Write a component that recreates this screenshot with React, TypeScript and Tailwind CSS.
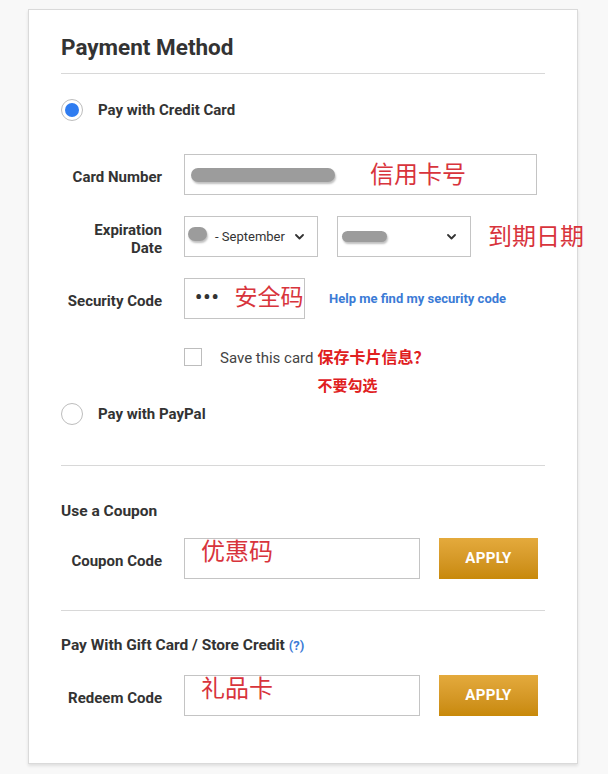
import React from "react";

const Chevron = () => (
  <svg width="9" height="6" viewBox="0 0 9 6" className="shrink-0">
    <polyline points="1,1 4.5,4.5 8,1" fill="none" stroke="#333" strokeWidth="1.8" strokeLinecap="round" strokeLinejoin="round" />
  </svg>
);

const Label = ({ children }: { children: React.ReactNode }) => (
  <div className="w-[101px] shrink-0 text-right text-[15px] leading-[18px] font-bold text-[#333] mr-[22px] mt-[4px] whitespace-nowrap">
    {children}
  </div>
);

const Radio = ({ checked }: { checked?: boolean }) => (
  <div className="w-[22px] h-[22px] rounded-full border border-[#bdbdbd] bg-white flex items-center justify-center shrink-0">
    {checked && <div className="w-[14px] h-[14px] rounded-full bg-[#2f7cf0]" />}
  </div>
);

const Apply = () => (
  <div className="ml-[19px] w-[99px] h-[41px] shrink-0 bg-gradient-to-b from-[#e4aa3c] to-[#c88908] flex items-center justify-center text-white text-[15px] font-bold tracking-[0.3px]">
    APPLY
  </div>
);

export default function App() {
  return (
    <div className="min-h-[774px] bg-[#f8f8f8] pt-[9px] pl-[28px] font-['Roboto','Noto_Sans_CJK_SC',sans-serif]">
      <div className="w-[550px] h-[755px] bg-white border border-[#dadada] shadow-[0_2px_3px_rgba(0,0,0,0.10)] px-[32px]">
        <h2 className="pt-[24px] text-[22.5px] leading-[26px] font-bold text-[#333]">Payment Method</h2>
        <div className="mt-[13px] h-px bg-[#d8d8d8]" />

        <div className="mt-[25px] flex items-center h-[22px]">
          <Radio checked />
          <span className="ml-[15px] text-[15px] font-bold text-[#333]">Pay with Credit Card</span>
        </div>

        <div className="mt-[33px] flex items-center">
          <Label>Card Number</Label>
          <div className="w-[353px] h-[41px] shrink-0 border border-[#c4c4c4] flex items-center pl-[6px]">
            <div className="w-[144px] h-[14px] rounded-full bg-[#9c9c9c] shadow-[1px_2px_2px_rgba(0,0,0,0.25)]" />
            <span className="ml-[35px] text-[24px] text-[#d8343c] whitespace-nowrap">信用卡号</span>
          </div>
        </div>

        <div className="mt-[21px] flex items-center">
          <Label>
            Expiration
            <br />
            Date
          </Label>
          <div className="w-[134px] h-[41px] shrink-0 border border-[#c4c4c4] flex items-center pl-[3px] pr-[13px]">
            <div className="w-[19px] h-[14px] rounded-full bg-[#9c9c9c] shadow-[1px_2px_2px_rgba(0,0,0,0.25)] -mt-[6px]" />
            <span className="ml-[8px] text-[13px] text-[#333] whitespace-nowrap">- September</span>
            <div className="flex-1" />
            <Chevron />
          </div>
          <div className="ml-[19px] w-[134px] h-[41px] shrink-0 border border-[#c4c4c4] flex items-center pl-[4px] pr-[14px]">
            <div className="w-[45px] h-[11px] rounded-full bg-[#9c9c9c] shadow-[1px_2px_2px_rgba(0,0,0,0.25)]" />
            <div className="flex-1" />
            <Chevron />
          </div>
          <span className="ml-[17px] text-[24px] text-[#d8343c] whitespace-nowrap">到期日期</span>
        </div>

        <div className="mt-[21px] flex items-center">
          <Label>Security Code</Label>
          <div className="w-[121px] h-[41px] shrink-0 border border-[#c4c4c4] flex items-center pl-[10px]">
            <span className="text-[20px] font-bold text-[#333] tracking-[1px] -mt-[4px]">•••</span>
            <span className="ml-[15px] text-[23px] text-[#d8343c] whitespace-nowrap">安全码</span>
          </div>
          <span className="ml-[24px] text-[13px] font-bold text-[#3b7bd6] whitespace-nowrap">Help me find my security code</span>
        </div>

        <div className="mt-[29px] flex items-start pl-[123px]">
          <div className="w-[18px] h-[18px] border border-[#bdbdbd] bg-white shrink-0" />
          <span className="ml-[18px] text-[15px] leading-[20px] text-[#444] whitespace-nowrap">Save this card</span>
          <div className="ml-[4px] flex flex-col text-[16px] leading-[20px] font-bold text-[#e0201e] whitespace-nowrap">
            <span>保存卡片信息？</span>
            <span className="mt-[8px] text-[15px]">不要勾选</span>
          </div>
        </div>

        <div className="mt-[7px] flex items-center h-[22px]">
          <Radio />
          <span className="ml-[15px] text-[15px] font-bold text-[#333]">Pay with PayPal</span>
        </div>

        <div className="mt-[40px] h-px bg-[#d8d8d8]" />

        <div className="mt-[35px] text-[15.5px] leading-[20px] font-bold text-[#333]">Use a Coupon</div>

        <div className="mt-[17px] flex items-center">
          <Label>Coupon Code</Label>
          <div className="w-[236px] h-[41px] shrink-0 border border-[#c4c4c4] pl-[16px]">
            <span className="text-[24px] leading-[26px] text-[#d8343c] whitespace-nowrap">优惠码</span>
          </div>
          <Apply />
        </div>

        <div className="mt-[31px] h-px bg-[#d8d8d8]" />

        <div className="mt-[24px] text-[15.5px] leading-[20px] font-bold text-[#333] whitespace-nowrap">
          Pay With Gift Card / Store Credit <span className="text-[13px] text-[#3b7bd6]">(?)</span>
        </div>

        <div className="mt-[19px] flex items-center">
          <Label>Redeem Code</Label>
          <div className="w-[236px] h-[41px] shrink-0 border border-[#c4c4c4] pl-[16px]">
            <span className="text-[24px] leading-[26px] text-[#d8343c] whitespace-nowrap">礼品卡</span>
          </div>
          <Apply />
        </div>
      </div>
    </div>
  );
}
